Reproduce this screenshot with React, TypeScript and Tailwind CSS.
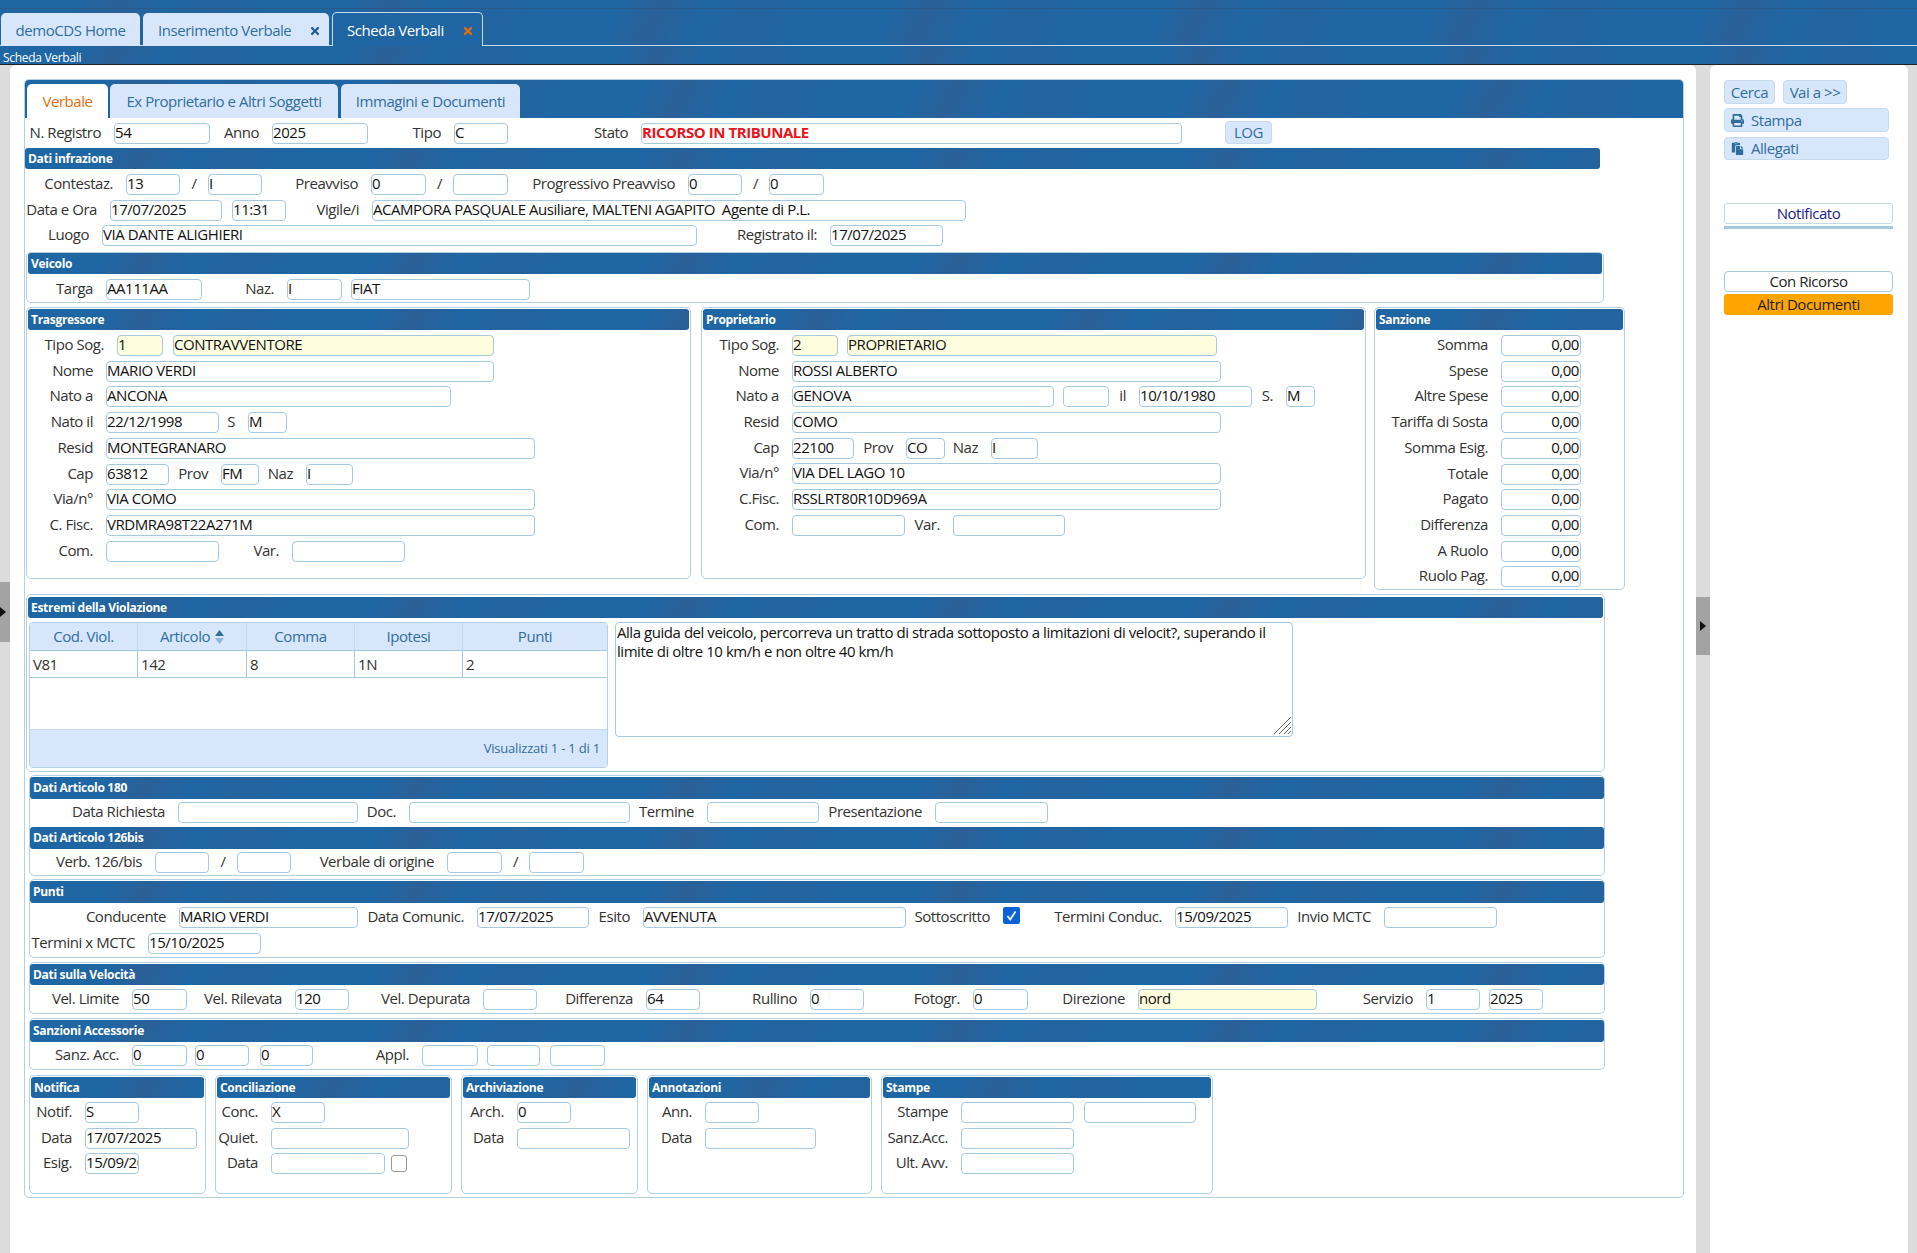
import type { ReactNode } from "react";
import { FaPaste, FaPrint, FaTimes } from "react-icons/fa";

const BLUE =
  "bg-[#1f65a3] bg-[repeating-linear-gradient(118deg,#1f66a4_0px,#1f66a4_70px,#2a6098_105px,#1f66a4_150px,#23639e_190px,#1f66a4_240px)]";

function L({ className = "", children }: { className?: string; children?: ReactNode }) {
  return <span className={"mb-[2px] mr-[13px] shrink-0 whitespace-nowrap text-right text-[#333] " + className}>{children}</span>;
}

function I({ className = "", value = "", yellow = false }: { className?: string; value?: string; yellow?: boolean }) {
  return (
    <input
      readOnly
      value={value}
      className={
        "h-[21px] shrink-0 rounded-[4px] border border-[#a6c9e2] pb-[2px] text-[#111] outline-none " +
        (yellow ? "bg-[#fefdde] " : "bg-white ") +
        className
      }
    />
  );
}

function Sep({ className = "" }: { className?: string }) {
  return <span className={"mb-[2px] shrink-0 text-center text-[#333] " + className}>/</span>;
}

function Row({ className = "", children }: { className?: string; children: ReactNode }) {
  return <div className={"flex h-[21px] items-center " + className}>{children}</div>;
}

function Bar({ className = "", children }: { className?: string; children: ReactNode }) {
  return (
    <div className={"flex h-[21px] items-center rounded-[3px] pl-[3px] text-[12px] font-bold tracking-[-0.3px] text-white " + BLUE + " " + className}>
      {children}
    </div>
  );
}

function Box({ className = "", children }: { className?: string; children: ReactNode }) {
  return <div className={"shrink-0 rounded-[5px] border border-[#b4d0e2] bg-white " + className}>{children}</div>;
}

function SanzRow({ label, className = "" }: { label: string; className?: string }) {
  return (
    <Row className={className}>
      <L className="w-[112px]">{label}</L>
      <I className="w-[80px] pr-[1px] text-right" value="0,00" />
    </Row>
  );
}

function Btn({ className = "", children }: { className?: string; children: ReactNode }) {
  return (
    <div className={"flex items-center rounded-[4px] border border-[#c5dbec] bg-[#d8e6fb] text-[#2e6e9e] " + className}>
      {children}
    </div>
  );
}

export default function App() {
  return (
    <div className="flex h-[1253px] w-[1917px] flex-col overflow-hidden bg-[#dcdcdc] font-['Open_Sans',sans-serif] text-[15px] tracking-[-0.45px]">
      <div className={"h-[46px] shrink-0 " + BLUE}>
        <div className="h-[9px] border-b border-[#2b5a88]" />
        <div className="flex h-[37px] items-end border-b border-[#c5dbec] pl-px">
          <div className="-mb-px flex h-[33px] w-[139px] items-center justify-center rounded-t-[5px] bg-[#d8e6fb] pt-[2px] text-[#2e6e9e]">demoCDS Home</div>
          <div className="-mb-px ml-[3px] flex h-[33px] w-[186px] items-center rounded-t-[5px] bg-[#d8e6fb] pl-[15px] pt-[2px] text-[#2e6e9e]">
            Inserimento Verbale
            <FaTimes className="ml-[18px] text-[12px] text-[#1f5f96]" />
          </div>
          <div className="-mb-px ml-[3px] flex h-[34px] w-[151px] items-center rounded-t-[5px] border border-b-0 border-[#c5dbec] bg-[#1f65a3] pl-[14px] pt-[2px] text-white">
            Scheda Verbali
            <FaTimes className="ml-[18px] text-[12px] text-[#e17009]" />
          </div>
        </div>
      </div>
      <div className={"flex h-[19px] shrink-0 items-center border-b border-[#222] pl-[3px] pt-[5px] text-[12px] tracking-[-0.3px] text-white " + BLUE}>Scheda Verbali</div>

      <div className="flex min-h-0 flex-1">
        <div className="flex w-[10px] shrink-0 flex-col">
          <div className="mt-[517px] flex h-[60px] items-center bg-[#a3a3a3]">
            <div className="h-0 w-0 border-y-[5px] border-l-[6px] border-y-transparent border-l-[#111]" />
          </div>
        </div>

        <div className="w-[1686px] shrink-0 rounded-tl-[6px] rounded-tr-[6px] bg-white pl-[14px] pt-[14px]">
          <div className="h-[1119px] w-[1660px] rounded-[5px] border border-[#b4d0e2]">
            {/* tab strip */}
            <div className={"flex h-[38px] items-end rounded-t-[4px] pl-[2px] " + BLUE}>
              <div className="flex h-[34px] w-[81px] items-center justify-center rounded-t-[5px] bg-white text-[#e17009]">Verbale</div>
              <div className="ml-[2px] flex h-[34px] w-[228px] items-center justify-center rounded-t-[5px] bg-[#d8e6fb] text-[#2e6e9e]">Ex Proprietario e Altri Soggetti</div>
              <div className="ml-[3px] flex h-[34px] w-[179px] items-center justify-center rounded-t-[5px] bg-[#d8e6fb] text-[#2e6e9e]">Immagini e Documenti</div>
            </div>

            <Row className="mt-[5px]">
              <L className="w-[76px]">N. Registro</L>
              <I className="w-[96px]" value="54" />
              <L className="w-[49px]">Anno</L>
              <I className="w-[96px]" value="2025" />
              <L className="w-[73px]">Tipo</L>
              <I className="w-[54px]" value="C" />
              <L className="w-[120px]">Stato</L>
              <I className="w-[541px] font-bold !text-[#e8141c]" value="RICORSO IN TRIBUNALE" />
              <Btn className="mb-[2px] ml-[43px] h-[23px] w-[47px] justify-center">LOG</Btn>
            </Row>

            <Bar className="mt-[4px] h-[20px] w-[1575px]">Dati infrazione</Bar>
            <Row className="mt-[5px]">
              <L className="w-[88px]">Contestaz.</L>
              <I className="w-[54px]" value="13" />
              <Sep className="w-[28px]" />
              <I className="w-[54px]" value="I" />
              <L className="w-[96px]">Preavviso</L>
              <I className="w-[55px]" value="0" />
              <Sep className="w-[27px]" />
              <I className="w-[55px]" />
              <L className="w-[167px]">Progressivo Preavviso</L>
              <I className="w-[54px]" value="0" />
              <Sep className="w-[27px]" />
              <I className="w-[55px]" value="0" />
            </Row>
            <Row className="mt-[5px]">
              <L className="w-[72px]">Data e Ora</L>
              <I className="w-[112px]" value="17/07/2025" />
              <I className="ml-[10px] w-[54px]" value="11:31" />
              <L className="w-[73px]">Vigile/i</L>
              <I className="w-[594px]" value="ACAMPORA PASQUALE Ausiliare, MALTENI AGAPITO  Agente di P.L." />
            </Row>
            <Row className="mt-[4px]">
              <L className="w-[64px]">Luogo</L>
              <I className="w-[595px]" value="VIA DANTE ALIGHIERI" />
              <L className="w-[120px]">Registrato il:</L>
              <I className="w-[113px]" value="17/07/2025" />
            </Row>

            <Box className="ml-[1px] mt-[6px] h-[51px] w-[1578px] px-px">
              <Bar>Veicolo</Bar>
              <Row className="mt-[5px]">
                <L className="w-[65px]">Targa</L>
                <I className="w-[96px]" value="AA111AA" />
                <L className="w-[72px]">Naz.</L>
                <I className="w-[55px]" value="I" />
                <I className="ml-[9px] w-[179px]" value="FIAT" />
              </Row>
            </Box>

            <div className="ml-[1px] mt-[4px] flex items-start">
              <Box className="h-[272px] w-[665px] px-px pt-px">
                <Bar>Trasgressore</Bar>
                <Row className="mt-[5px]">
                  <L className="w-[76px]">Tipo Sog.</L>
                  <I className="w-[46px]" yellow value="1" />
                  <I className="ml-[10px] w-[321px]" yellow value="CONTRAVVENTORE" />
                </Row>
                <Row className="mt-[5px]">
                  <L className="w-[65px]">Nome</L>
                  <I className="w-[388px]" value="MARIO VERDI" />
                </Row>
                <Row className="mt-[4px]">
                  <L className="w-[65px]">Nato a</L>
                  <I className="w-[345px]" value="ANCONA" />
                </Row>
                <Row className="mt-[5px]">
                  <L className="w-[65px]">Nato il</L>
                  <I className="w-[113px]" value="22/12/1998" />
                  <L className="w-[16px]">S</L>
                  <I className="w-[39px]" value="M" />
                </Row>
                <Row className="mt-[5px]">
                  <L className="w-[65px]">Resid</L>
                  <I className="w-[429px]" value="MONTEGRANARO" />
                </Row>
                <Row className="mt-[5px]">
                  <L className="w-[65px]">Cap</L>
                  <I className="w-[63px]" value="63812" />
                  <L className="w-[39px]">Prov</L>
                  <I className="w-[38px]" value="FM" />
                  <L className="w-[34px]">Naz</L>
                  <I className="w-[47px]" value="I" />
                </Row>
                <Row className="mt-[4px]">
                  <L className="w-[65px]">Via/n°</L>
                  <I className="w-[429px]" value="VIA COMO" />
                </Row>
                <Row className="mt-[5px]">
                  <L className="w-[65px]">C. Fisc.</L>
                  <I className="w-[429px]" value="VRDMRA98T22A271M" />
                </Row>
                <Row className="mt-[5px]">
                  <L className="w-[65px]">Com.</L>
                  <I className="w-[113px]" />
                  <L className="w-[60px]">Var.</L>
                  <I className="w-[113px]" />
                </Row>
              </Box>

              <Box className="ml-[10px] h-[272px] w-[665px] px-px pt-px">
                <Bar>Proprietario</Bar>
                <Row className="mt-[5px]">
                  <L className="w-[76px]">Tipo Sog.</L>
                  <I className="w-[46px]" yellow value="2" />
                  <I className="ml-[9px] w-[370px]" yellow value="PROPRIETARIO" />
                </Row>
                <Row className="mt-[5px]">
                  <L className="w-[76px]">Nome</L>
                  <I className="w-[429px]" value="ROSSI ALBERTO" />
                </Row>
                <Row className="mt-[4px]">
                  <L className="w-[76px]">Nato a</L>
                  <I className="w-[262px]" value="GENOVA" />
                  <I className="ml-[9px] w-[46px]" />
                  <L className="w-[17px]">il</L>
                  <I className="w-[113px]" value="10/10/1980" />
                  <L className="w-[21px]">S.</L>
                  <I className="w-[29px]" value="M" />
                </Row>
                <Row className="mt-[5px]">
                  <L className="w-[76px]">Resid</L>
                  <I className="w-[429px]" value="COMO" />
                </Row>
                <Row className="mt-[5px]">
                  <L className="w-[76px]">Cap</L>
                  <I className="w-[62px]" value="22100" />
                  <L className="w-[39px]">Prov</L>
                  <I className="w-[39px]" value="CO" />
                  <L className="w-[33px]">Naz</L>
                  <I className="w-[47px]" value="I" />
                </Row>
                <Row className="mt-[4px]">
                  <L className="w-[76px]">Via/n°</L>
                  <I className="w-[429px]" value="VIA DEL LAGO 10" />
                </Row>
                <Row className="mt-[5px]">
                  <L className="w-[76px]">C.Fisc.</L>
                  <I className="w-[429px]" value="RSSLRT80R10D969A" />
                </Row>
                <Row className="mt-[5px]">
                  <L className="w-[76px]">Com.</L>
                  <I className="w-[113px]" />
                  <L className="w-[35px]">Var.</L>
                  <I className="w-[112px]" />
                </Row>
              </Box>

              <Box className="ml-[8px] h-[283px] w-[251px] px-px pt-px">
                <Bar>Sanzione</Bar>
                <SanzRow className="mt-[5px]" label="Somma" />
                <SanzRow className="mt-[5px]" label="Spese" />
                <SanzRow className="mt-[4px]" label="Altre Spese" />
                <SanzRow className="mt-[5px]" label="Tariffa di Sosta" />
                <SanzRow className="mt-[5px]" label="Somma Esig." />
                <SanzRow className="mt-[5px]" label="Totale" />
                <SanzRow className="mt-[4px]" label="Pagato" />
                <SanzRow className="mt-[5px]" label="Differenza" />
                <SanzRow className="mt-[5px]" label="A Ruolo" />
                <SanzRow className="mt-[4px]" label="Ruolo Pag." />
              </Box>
            </div>

            <Box className="ml-[1px] mt-[4px] h-[178px] w-[1579px] px-px pt-[2px]">
              <Bar className="h-[20px]">Estremi della Violazione</Bar>
              <div className="mt-[4px] flex items-start">
                <div className="ml-px h-[146px] w-[579px] shrink-0 overflow-hidden rounded-[4px] border border-[#b4d0e2] bg-white">
                  <div className="grid h-[27px] grid-cols-[108px_109px_108px_108px_1fr] bg-[#d8e6fb] text-center text-[#2e6e9e]">
                    <div className="flex items-center justify-center border-r border-[#c5dbec]">Cod. Viol.</div>
                    <div className="flex items-center justify-center border-r border-[#c5dbec]">
                      Articolo
                      <svg className="ml-[5px]" width="9" height="14" viewBox="0 0 9 14">
                        <path d="M4.5 0 9 6H0z" fill="#2e6e9e" />
                        <path d="M4.5 14 0 8h9z" fill="#8fb4d6" />
                      </svg>
                    </div>
                    <div className="flex items-center justify-center border-r border-[#c5dbec]">Comma</div>
                    <div className="flex items-center justify-center border-r border-[#c5dbec]">Ipotesi</div>
                    <div className="flex items-center justify-center">Punti</div>
                  </div>
                  <div className="grid h-[28px] grid-cols-[108px_109px_108px_108px_1fr] items-stretch border-y border-[#a6c9e2] text-[#333]">
                    <div className="flex items-center border-r border-[#a6c9e2] pl-[3px]">V81</div>
                    <div className="flex items-center border-r border-[#a6c9e2] pl-[3px]">142</div>
                    <div className="flex items-center border-r border-[#a6c9e2] pl-[3px]">8</div>
                    <div className="flex items-center border-r border-[#a6c9e2] pl-[3px]">1N</div>
                    <div className="flex items-center pl-[3px]">2</div>
                  </div>
                  <div className="h-[51px]" />
                  <div className="flex h-[38px] items-center justify-end border-t border-[#c5dbec] bg-[#d8e6fb] pr-[7px] text-[13px] tracking-[-0.2px] text-[#2e6e9e]">
                    Visualizzati 1 - 1 di 1
                  </div>
                </div>
                <div className="relative ml-[7px] h-[115px] w-[678px] shrink-0">
                  <textarea
                    readOnly
                    className="h-full w-full resize-none rounded-[4px] border border-[#a6c9e2] bg-white pl-px leading-[19px] text-[#111] outline-none"
                    value="Alla guida del veicolo, percorreva un tratto di strada sottoposto a limitazioni di velocit?, superando il limite di oltre 10 km/h e non oltre 40 km/h"
                  />
                  <svg className="absolute bottom-[2px] right-[1px]" width="19" height="19" viewBox="0 0 19 19" stroke="#666" strokeWidth="1">
                    <path d="M1 18 18 1M6 18 18 6M11 18 18 11M15 18 18 15" />
                  </svg>
                </div>
              </div>
            </Box>

            <Box className="ml-[4px] mt-[3px] h-[101px] w-[1576px] pt-px">
              <Bar className="h-[22px]">Dati Articolo 180</Bar>
              <Row className="mt-[3px]">
                <L className="w-[135px]">Data Richiesta</L>
                <I className="w-[180px]" />
                <L className="w-[38px]">Doc.</L>
                <I className="w-[221px]" />
                <L className="w-[64px]">Termine</L>
                <I className="w-[112px]" />
                <L className="w-[103px]">Presentazione</L>
                <I className="w-[113px]" />
              </Row>
              <Bar className="mt-[4px] h-[22px]">Dati Articolo 126bis</Bar>
              <Row className="mt-[3px]">
                <L className="w-[112px]">Verb. 126/bis</L>
                <I className="w-[54px]" />
                <Sep className="w-[28px]" />
                <I className="w-[54px]" />
                <L className="w-[143px]">Verbale di origine</L>
                <I className="w-[55px]" />
                <Sep className="w-[27px]" />
                <I className="w-[55px]" />
              </Row>
            </Box>

            <Box className="ml-[4px] mt-[3px] h-[79px] w-[1576px] pt-px">
              <Bar className="h-[22px]">Punti</Bar>
              <Row className="mt-[4px]">
                <L className="w-[136px]">Conducente</L>
                <I className="w-[179px]" value="MARIO VERDI" />
                <L className="w-[106px]">Data Comunic.</L>
                <I className="w-[112px]" value="17/07/2025" />
                <L className="w-[41px]">Esito</L>
                <I className="w-[263px]" value="AVVENUTA" />
                <L className="w-[84px]">Sottoscritto</L>
                <div className="mb-[4px] flex h-[17px] w-[17px] shrink-0 items-center justify-center rounded-[2px] bg-[#0b62d6]">
                  <svg width="13" height="13" viewBox="0 0 13 13" fill="none">
                    <path d="M2.5 7 5.2 10.5 10.5 2.5" stroke="#fff" strokeWidth="1.8" />
                  </svg>
                </div>
                <L className="w-[142px]">Termini Conduc.</L>
                <I className="w-[113px]" value="15/09/2025" />
                <L className="w-[83px]">Invio MCTC</L>
                <I className="w-[113px]" />
              </Row>
              <Row className="mt-[5px]">
                <L className="w-[105px]">Termini x MCTC</L>
                <I className="w-[113px]" value="15/10/2025" />
              </Row>
            </Box>

            <Box className="ml-[4px] mt-[4px] h-[52px] w-[1576px] pt-px">
              <Bar>Dati sulla Velocità</Bar>
              <Row className="mt-[4px]">
                <L className="w-[89px]">Vel. Limite</L>
                <I className="w-[55px]" value="50" />
                <L className="w-[95px]">Vel. Rilevata</L>
                <I className="w-[54px]" value="120" />
                <L className="w-[121px]">Vel. Depurata</L>
                <I className="w-[54px]" />
                <L className="w-[96px]">Differenza</L>
                <I className="w-[54px]" value="64" />
                <L className="w-[97px]">Rullino</L>
                <I className="w-[54px]" value="0" />
                <L className="w-[96px]">Fotogr.</L>
                <I className="w-[55px]" value="0" />
                <L className="w-[97px]">Direzione</L>
                <I className="w-[179px]" yellow value="nord" />
                <L className="w-[96px]">Servizio</L>
                <I className="w-[54px]" value="1" />
                <I className="ml-[9px] w-[54px]" value="2025" />
              </Row>
            </Box>

            <Box className="ml-[4px] mt-[4px] h-[52px] w-[1576px] pt-px">
              <Bar className="h-[22px]">Sanzioni Accessorie</Bar>
              <Row className="mt-[3px]">
                <L className="w-[89px]">Sanz. Acc.</L>
                <I className="w-[55px]" value="0" />
                <I className="ml-[8px] w-[54px]" value="0" />
                <I className="ml-[11px] w-[53px]" value="0" />
                <L className="w-[96px]">Appl.</L>
                <I className="w-[56px]" />
                <I className="ml-[9px] w-[53px]" />
                <I className="ml-[10px] w-[55px]" />
              </Row>
            </Box>

            <div className="ml-[4px] mt-[5px] flex items-start gap-[9px]">
              <Box className="h-[119px] w-[177px] pt-px">
                <Bar className="mx-px">Notifica</Bar>
                <Row className="mt-[4px] pl-px">
                  <L className="w-[41px]">Notif.</L>
                  <I className="w-[54px]" value="S" />
                </Row>
                <Row className="mt-[5px] pl-px">
                  <L className="w-[41px]">Data</L>
                  <I className="w-[112px]" value="17/07/2025" />
                </Row>
                <Row className="mt-[4px] pl-px">
                  <L className="w-[41px]">Esig.</L>
                  <I className="w-[54px]" value="15/09/2025" />
                </Row>
              </Box>
              <Box className="h-[119px] w-[237px] pt-px">
                <Bar className="mx-px">Conciliazione</Bar>
                <Row className="mt-[4px] pl-px">
                  <L className="w-[41px]">Conc.</L>
                  <I className="w-[54px]" value="X" />
                </Row>
                <Row className="mt-[5px] pl-px">
                  <L className="w-[41px]">Quiet.</L>
                  <I className="w-[138px]" />
                </Row>
                <Row className="mt-[4px] pl-px">
                  <L className="w-[41px]">Data</L>
                  <I className="w-[114px]" />
                  <div className="ml-[6px] h-[17px] w-[16px] shrink-0 rounded-[3px] border border-[#999] bg-white" />
                </Row>
              </Box>
              <Box className="h-[119px] w-[177px] pt-px">
                <Bar className="mx-px">Archiviazione</Bar>
                <Row className="mt-[4px] pl-px">
                  <L className="w-[41px]">Arch.</L>
                  <I className="w-[54px]" value="0" />
                </Row>
                <Row className="mt-[5px] pl-px">
                  <L className="w-[41px]">Data</L>
                  <I className="w-[113px]" />
                </Row>
              </Box>
              <Box className="h-[119px] w-[225px] pt-px">
                <Bar className="mx-px">Annotazioni</Bar>
                <Row className="mt-[4px] pl-px">
                  <L className="w-[43px]">Ann.</L>
                  <I className="w-[54px]" />
                </Row>
                <Row className="mt-[5px] pl-px">
                  <L className="w-[43px]">Data</L>
                  <I className="w-[111px]" />
                </Row>
              </Box>
              <Box className="h-[119px] w-[332px] pt-px">
                <Bar className="mx-px">Stampe</Bar>
                <Row className="mt-[4px] pl-px">
                  <L className="w-[65px]">Stampe</L>
                  <I className="w-[113px]" />
                  <I className="ml-[10px] w-[112px]" />
                </Row>
                <Row className="mt-[5px] pl-px">
                  <L className="w-[65px]">Sanz.Acc.</L>
                  <I className="w-[113px]" />
                </Row>
                <Row className="mt-[4px] pl-px">
                  <L className="w-[65px]">Ult. Avv.</L>
                  <I className="w-[113px]" />
                </Row>
              </Box>
            </div>
          </div>
        </div>

        <div className="flex w-[14px] shrink-0 flex-col">
          <div className="mt-[532px] flex h-[58px] items-center justify-center bg-[#a3a3a3]">
            <div className="h-0 w-0 border-y-[5px] border-l-[6px] border-y-transparent border-l-[#111]" />
          </div>
        </div>

        <div className="w-[198px] shrink-0 rounded-t-[6px] bg-white pl-[14px] pt-[15px]">
          <div className="flex">
            <Btn className="h-[24px] w-[51px] justify-center">Cerca</Btn>
            <Btn className="ml-[8px] h-[24px] w-[64px] justify-center">Vai a &gt;&gt;</Btn>
          </div>
          <Btn className="mt-[4px] h-[24px] w-[165px] pl-[6px]">
            <FaPrint className="text-[13px] text-[#2e6e9e]" />
            <span className="ml-[7px]">Stampa</span>
          </Btn>
          <Btn className="mt-[5px] h-[23px] w-[165px] pl-[6px]">
            <FaPaste className="text-[13px] text-[#2e6e9e]" />
            <span className="ml-[7px]">Allegati</span>
          </Btn>
          <div className="mt-[43px] h-[26px] w-[169px] border-b-[3px] border-[#a6c9e2] pb-[2px]">
            <div className="flex h-[21px] items-center justify-center rounded-[3px] border border-[#c5dbec] text-[#1a1a8c]">Notificato</div>
          </div>
          <div className="mt-[42px] flex h-[21px] w-[169px] items-center justify-center rounded-[4px] border border-[#a6c9e2] text-[#222]">Con Ricorso</div>
          <div className="mt-[2px] flex h-[21px] w-[169px] items-center justify-center rounded-[3px] bg-[#ffa500] text-[#222]">Altri Documenti</div>
        </div>
      </div>
    </div>
  );
}
